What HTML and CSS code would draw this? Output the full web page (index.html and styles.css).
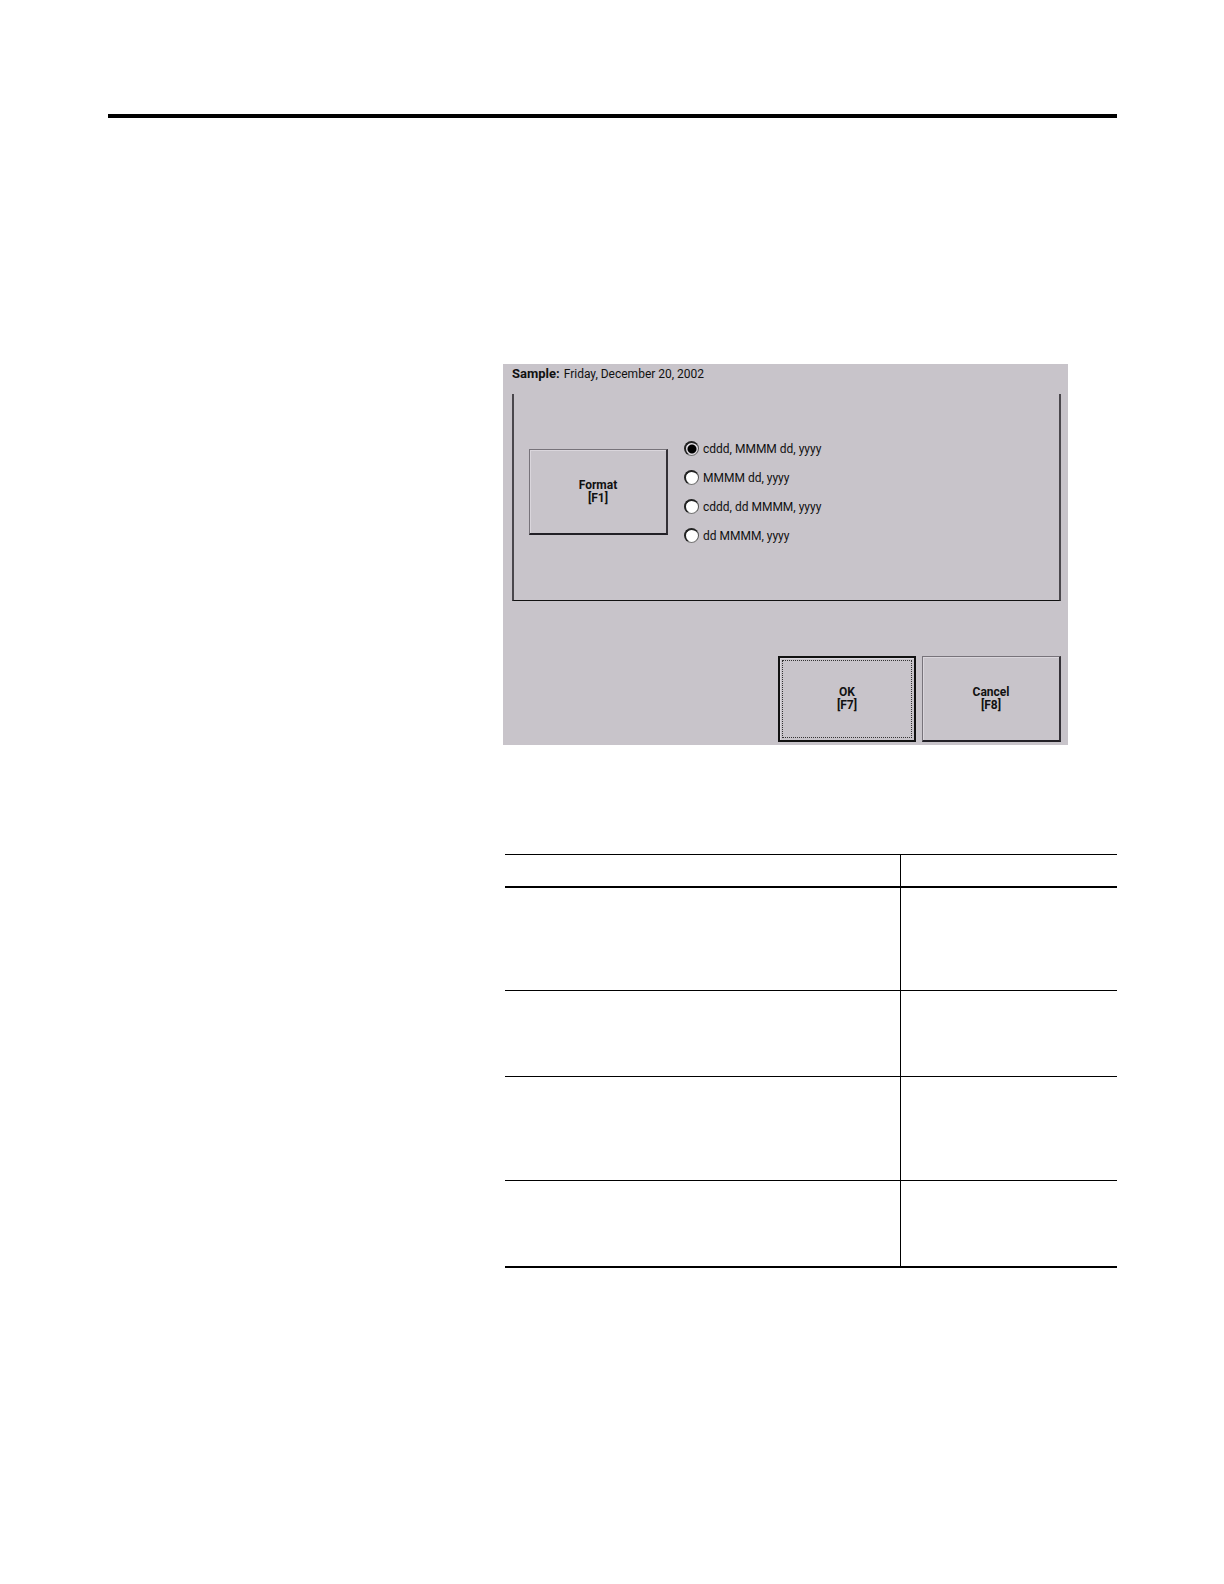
FILE: index.html
```html
<!DOCTYPE html>
<html lang="en">
<head>
  <meta charset="UTF-8">
  <title>Date Format</title>
  <link rel="stylesheet" href="styles.css">
</head>
<body>
  <hr class="rule">
  <main class="content">
    <form class="dialog">
      <p class="sample"><strong>Sample:</strong> <output>Friday, December 20, 2002</output></p>
      <fieldset class="group" aria-label="Date format">
        <div class="group-row">
          <button type="button" class="btn">Format<br>[F1]</button>
          <div class="options">
            <label class="option"><input type="radio" name="format" checked>cddd, MMMM dd, yyyy</label>
            <label class="option"><input type="radio" name="format">MMMM dd, yyyy</label>
            <label class="option"><input type="radio" name="format">cddd, dd MMMM, yyyy</label>
            <label class="option"><input type="radio" name="format">dd MMMM, yyyy</label>
          </div>
        </div>
      </fieldset>
      <div class="actions">
        <button type="button" class="btn btn-default">OK<br>[F7]</button>
        <button type="button" class="btn">Cancel<br>[F8]</button>
      </div>
    </form>

    <table class="steps">
      <colgroup>
        <col>
        <col class="col-key">
      </colgroup>
      <thead>
        <tr><th></th><th></th></tr>
      </thead>
      <tbody>
        <tr class="tall"><td></td><td></td></tr>
        <tr><td></td><td></td></tr>
        <tr class="tall"><td></td><td></td></tr>
        <tr><td></td><td></td></tr>
      </tbody>
    </table>
  </main>
</body>
</html>
```

FILE: styles.css
```css
* {
  box-sizing: border-box;
}
body {
  margin: 0;
  padding: 114px 107px 60px 108px;
  background: #fff;
  color: #111;
  font-family: Roboto, sans-serif;
  font-size: 12px;
}
.rule {
  height: 4px;
  margin: 0;
  border: none;
  background: #000;
}
.content {
  margin: 246px 0 0 395px;
}

/* dialog */
.dialog {
  max-width: 565px;
  padding: 0 7px 3px 9px;
  background: #c8c4ca;
}
.sample {
  display: flex;
  gap: 4px;
  height: 30px;
  margin: 0;
  line-height: 20px;
}
.sample strong {
  font-size: 13px;
  font-weight: 700;
}
.group {
  min-width: 0;
  margin: 0;
  padding: 40px 15px 50px;
  border: 2px solid #4a474c;
  border-top: none;
  border-bottom: 1px solid #111;
}
.group-row {
  display: flex;
  align-items: center;
  gap: 16px;
}
.btn {
  width: 139px;
  height: 86px;
  padding: 0;
  border: 1px solid #77737a;
  border-right: 2px solid #333036;
  border-bottom: 2px solid #222026;
  background: #c8c4ca;
  box-shadow: inset 1px 1px #dad6dc;
  color: #111;
  font: 700 12px/13px Roboto, sans-serif;
}
.btn-default {
  width: 138px;
  border: 2px solid #111;
  outline: 1px dotted #333;
  outline-offset: -5px;
}
.option {
  display: flex;
  align-items: center;
  gap: 4px;
  height: 29px;
}
.option input {
  appearance: none;
  width: 15px;
  height: 15px;
  margin: 0;
  border: 2px solid #222;
  border-right: 1px solid #555;
  border-bottom: 1px solid #777;
  border-radius: 50%;
  background: #fff;
}
.option input:checked {
  background: radial-gradient(circle, #000 4px, #e4e0e6 5px);
}
.actions {
  display: flex;
  justify-content: flex-end;
  gap: 6px;
  margin-top: 55px;
}

/* table */
.steps {
  width: calc(100% - 2px);
  margin: 109px 0 0 2px;
  border-spacing: 0;
  table-layout: fixed;
}
.col-key {
  width: 217px;
}
.steps th,
.steps td {
  padding: 0;
  border-bottom: 1px solid #000;
}
.steps th {
  height: 34px;
  border-top: 1px solid #000;
  border-bottom-width: 2px;
}
.steps td {
  height: 86px;
}
.steps .tall td {
  height: 104px;
}
.steps .tall:first-child td {
  height: 103px;
}
.steps tbody tr:last-child td {
  height: 87px;
  border-bottom-width: 2px;
}
.steps th:last-child,
.steps td:last-child {
  border-left: 1px solid #000;
}
```
